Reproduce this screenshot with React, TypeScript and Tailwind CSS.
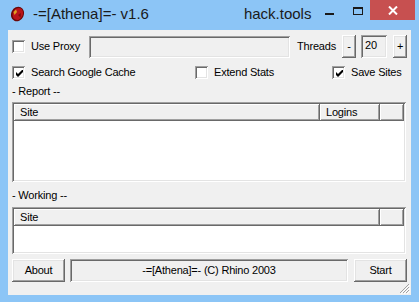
import React from 'react';

const SUNKEN =
  'shadow-[inset_1px_1px_0_#a0a0a0,inset_-1px_-1px_0_#ffffff,inset_2px_2px_0_#696969,inset_-2px_-2px_0_#e3e3e3]';
const RAISED =
  'shadow-[inset_-1px_-1px_0_#696969,inset_1px_1px_0_#ffffff,inset_-2px_-2px_0_#a0a0a0,inset_2px_2px_0_#e3e3e3]';
const HEADER =
  'shadow-[inset_-1px_-1px_0_#696969,inset_1px_1px_0_#ffffff,inset_-2px_-2px_0_#a0a0a0]';

function CheckBox({ checked = false }: { checked?: boolean }) {
  return (
    <div className={`w-[13px] h-[13px] bg-white flex items-center justify-center shrink-0 ${SUNKEN}`}>
      {checked && (
        <svg width="7" height="7" viewBox="0 0 7 7" className="mt-[1px] ml-[1px]">
          <path d="M0 2 L0 5 L2 7 L7 2 L7 -1 L2 4 Z" fill="#000" />
        </svg>
      )}
    </div>
  );
}

function Check({ label, checked }: { label: string; checked?: boolean }) {
  return (
    <div className="flex items-center gap-[6px]">
      <CheckBox checked={checked} />
      <span>{label}</span>
    </div>
  );
}

function ListView({ height, cols }: { height: string; cols: { label: string; w: string }[] }) {
  return (
    <div className={`w-[394px] ${height} bg-white p-[2px] flex flex-col ${SUNKEN}`}>
      <div className="flex h-[17px] bg-[#f0f0f0]">
        {cols.map((c, i) => (
          <div key={i} className={`${c.w} h-full pl-[6px] flex items-center ${HEADER}`}>
            {c.label}
          </div>
        ))}
        <div className={`flex-1 h-full ${HEADER}`} />
      </div>
    </div>
  );
}

function AthenaIcon() {
  return (
    <svg width="15" height="16" viewBox="0 0 15 16">
      <ellipse cx="7.5" cy="8" rx="6.3" ry="7.5" transform="rotate(25 7.5 8)" fill="#6a0808" />
      <ellipse cx="7.8" cy="7.8" rx="5" ry="6.2" transform="rotate(25 7.5 8)" fill="#b8141a" />
      <path d="M3.5 6 L6 3.5 L7 6 L4.5 9 Z" fill="#e0a020" />
      <path d="M8 9 L11 7 L10.5 11.5 Z" fill="#800a0a" />
    </svg>
  );
}

export default function App() {
  return (
    <div className="w-[419px] h-[302px] bg-[#8cc5f6] flex flex-col font-['Liberation_Sans',Arial,sans-serif] text-black overflow-hidden">
      <div className="h-[30px] flex items-start shrink-0">
        <div className="pl-[10px] pt-[6px]">
          <AthenaIcon />
        </div>
        <div className="ml-[8px] mt-[5px] text-[15px] leading-[18px] text-[#1a1a1a]">-=[Athena]=- v1.6</div>
        <div className="ml-[95px] mt-[5px] text-[15px] leading-[18px] text-[#1a1a1a]">hack.tools</div>
        <div className="ml-[14px] mt-[13px] w-[9px] h-[2px] bg-[#1a1a1a]" />
        <div className="ml-[19px] mt-[7px] w-[10px] h-[8px] border border-[#1a1a1a] border-t-2" />
        <div className="ml-[7px] w-[45px] h-[20px] bg-[#c75050] flex items-center justify-center">
          <svg width="10" height="9" viewBox="0 0 10 9">
            <path d="M1 0.5 L9 8.5 M9 0.5 L1 8.5" stroke="#fff" strokeWidth="2" />
          </svg>
        </div>
      </div>

      <div className="mx-[8px] h-[265px] bg-[#f0f0f0] text-[11px] leading-[13px] tracking-[-0.2px] relative px-[4px] pt-[5px] flex flex-col">
        <div className="flex items-center h-[23px]">
          <div className="w-[77px]">
            <Check label="Use Proxy" />
          </div>
          <div className={`w-[201px] h-[22px] ${SUNKEN}`} />
          <span className="ml-[7px] w-[45px]">Threads</span>
          <div className={`w-[14px] h-[23px] flex items-center justify-center ${RAISED}`}>-</div>
          <div className={`ml-[5px] w-[26px] h-[23px] pl-[4px] pt-[4px] ${SUNKEN}`}>20</div>
          <div className={`ml-[6px] w-[14px] h-[23px] flex items-center justify-center ${RAISED}`}>+</div>
        </div>

        <div className="flex items-center h-[13px] mt-[8px]">
          <div className="w-[183px]">
            <Check label="Search Google Cache" checked />
          </div>
          <div className="w-[137px]">
            <Check label="Extend Stats" />
          </div>
          <Check label="Save Sites" checked />
        </div>

        <div className="mt-[6px] h-[13px]">- Report --</div>

        <div className="mt-[4px]">
          <ListView
            height="h-[80px]"
            cols={[
              { label: 'Site', w: 'w-[306px]' },
              { label: 'Logins', w: 'w-[60px]' },
            ]}
          />
        </div>

        <div className="mt-[7px] h-[13px]">- Working --</div>

        <div className="mt-[5px]">
          <ListView height="h-[47px]" cols={[{ label: 'Site', w: 'w-[366px]' }]} />
        </div>

        <div className="mt-[5px] flex items-center">
          <div className={`w-[53px] h-[23px] flex items-center justify-center ${RAISED}`}>About</div>
          <div className={`ml-[5px] w-[278px] h-[23px] flex items-center justify-center ${SUNKEN}`}>
            -=[Athena]=- (C) Rhino 2003
          </div>
          <div className={`ml-[6px] w-[53px] h-[23px] flex items-center justify-center ${RAISED}`}>Start</div>
        </div>

        <svg className="absolute right-[1px] bottom-[1px]" width="12" height="12" viewBox="0 0 12 12">
          <path d="M11 2 L2 11 M11 5 L5 11 M11 8 L8 11" stroke="#a0a0a0" strokeWidth="1" />
          <path d="M12 3 L3 12 M12 6 L6 12 M12 9 L9 12" stroke="#ffffff" strokeWidth="1" />
        </svg>
      </div>
    </div>
  );
}
